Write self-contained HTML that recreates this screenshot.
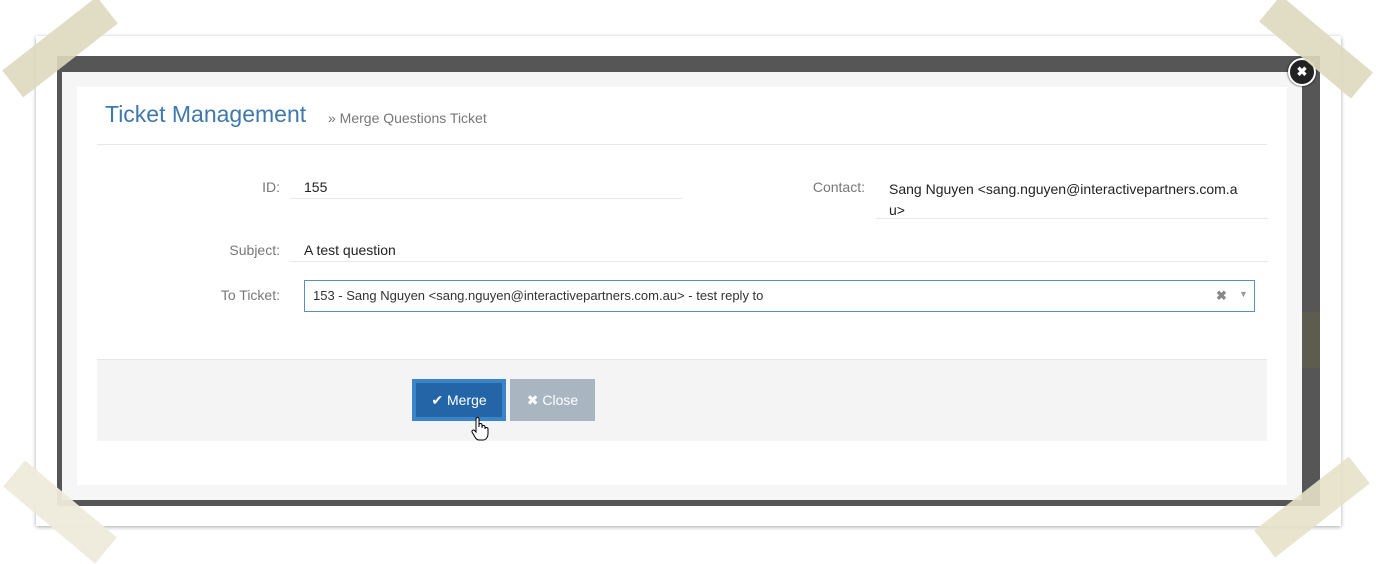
<!DOCTYPE html>
<html><head><style>
*{box-sizing:border-box;margin:0;padding:0}
body{width:1376px;height:562px;background:#fff;position:relative;overflow:hidden;font-family:"Liberation Sans",sans-serif;}
.frame{position:absolute;left:36px;top:36px;width:1305px;height:490px;background:#fff;box-shadow:0 1px 4px rgba(0,0,0,.35);}
.overlay{position:absolute;left:57px;top:56px;width:1263px;height:450px;background:#565656;}
.modal{position:absolute;left:62px;top:72px;width:1240px;height:428px;background:#f6f6f6;}
.inner{position:absolute;left:77px;top:87px;width:1210px;height:398px;background:#fff;}
.a{position:absolute;font-size:14px;}
.lbl{color:#777;text-align:right;}
.line{position:absolute;height:1px;background:#e8e8e8;}
.tape{position:absolute;background:rgba(222,217,190,.9);width:120px;height:34px;}
</style></head><body>
<div class="frame"></div>
<div class="overlay"></div>
<div style="position:absolute;left:1302px;top:312px;width:18px;height:56px;background:#5c5c4f"></div>
<div class="modal"></div>
<div class="inner"></div>
<div class="a" style="left:105px;top:101px;font-size:23px;color:#3e78ad;">Ticket Management</div>
<div class="a" style="left:328px;top:110px;font-size:14px;color:#777;">» Merge Questions Ticket</div>
<div class="line" style="left:97px;top:144px;width:1170px;"></div>
<div class="a lbl" style="left:200px;top:179px;width:80px;">ID:</div>
<div class="a" style="left:304px;top:179px;color:#222;">155</div>
<div class="line" style="left:290px;top:198px;width:392px;"></div>
<div class="a lbl" style="left:760px;top:179px;width:105px;">Contact:</div>
<div class="a" style="left:889px;top:179px;color:#222;width:370px;line-height:21px;">Sang Nguyen &lt;sang.nguyen@interactivepartners.com.a<br>u&gt;</div>
<div class="line" style="left:876px;top:218px;width:392px;"></div>
<div class="a lbl" style="left:180px;top:242px;width:100px;">Subject:</div>
<div class="a" style="left:304px;top:242px;color:#222;">A test question</div>
<div class="line" style="left:290px;top:261px;width:978px;"></div>
<div class="a lbl" style="left:180px;top:287px;width:100px;">To Ticket:</div>
<div style="position:absolute;left:304px;top:280px;width:951px;height:32px;border:1px solid #5b8fc0;background:#fff;"></div>
<div class="a" style="left:313px;top:288px;font-size:13px;color:#333;">153 - Sang Nguyen &lt;sang.nguyen@interactivepartners.com.au&gt; - test reply to</div>
<div class="a" style="left:1216px;top:288px;font-size:13px;color:#888;font-weight:bold;">✖</div>
<div class="a" style="left:1239px;top:289px;font-size:9px;color:#999;">▼</div>
<div style="position:absolute;left:97px;top:359px;width:1170px;height:82px;background:#f4f4f4;border-top:1px solid #e6e6e6;"></div>
<div style="position:absolute;left:412px;top:379px;width:94px;height:42px;background:#3a85c9;"></div>
<div style="position:absolute;left:416px;top:383px;width:86px;height:34px;background:#2465a8;color:#fff;font-size:14px;line-height:34px;text-align:center;">✔ Merge</div>
<div style="position:absolute;left:510px;top:379px;width:85px;height:42px;background:#a9b6c2;color:#fff;font-size:14px;line-height:42px;text-align:center;">✖ Close</div>
<svg style="position:absolute;left:470px;top:416px" width="20" height="26" viewBox="0 0 20 26"><path d="M6 14V3a1.5 1.5 0 0 1 3 0v8V9a1.5 1.5 0 0 1 3 0v3-1a1.5 1.5 0 0 1 3 0v2a1.5 1.5 0 0 1 3 0v5c0 3-2 6-5 6H9c-2 0-3-1-4-3l-3-5a1.5 1.5 0 0 1 2.5-1.5L6 16z" fill="#fff" stroke="#000" stroke-width="1"/></svg>
<div style="position:absolute;left:1288px;top:58px;width:28px;height:28px;border-radius:50%;background:#222;border:2px solid #fff;box-shadow:0 0 2px #000;color:#fff;font-size:13px;text-align:center;line-height:24px;font-weight:bold;">✖</div>
<div class="tape" style="left:0px;top:30px;transform:rotate(-38deg);"></div>
<div class="tape" style="left:1256px;top:30px;transform:rotate(40deg);"></div>
<div class="tape" style="left:0px;top:495px;transform:rotate(40deg);background:rgba(238,235,220,.95)"></div>
<div class="tape" style="left:1252px;top:490px;transform:rotate(-38deg);background:rgba(230,225,200,.9)"></div>
</body></html>
